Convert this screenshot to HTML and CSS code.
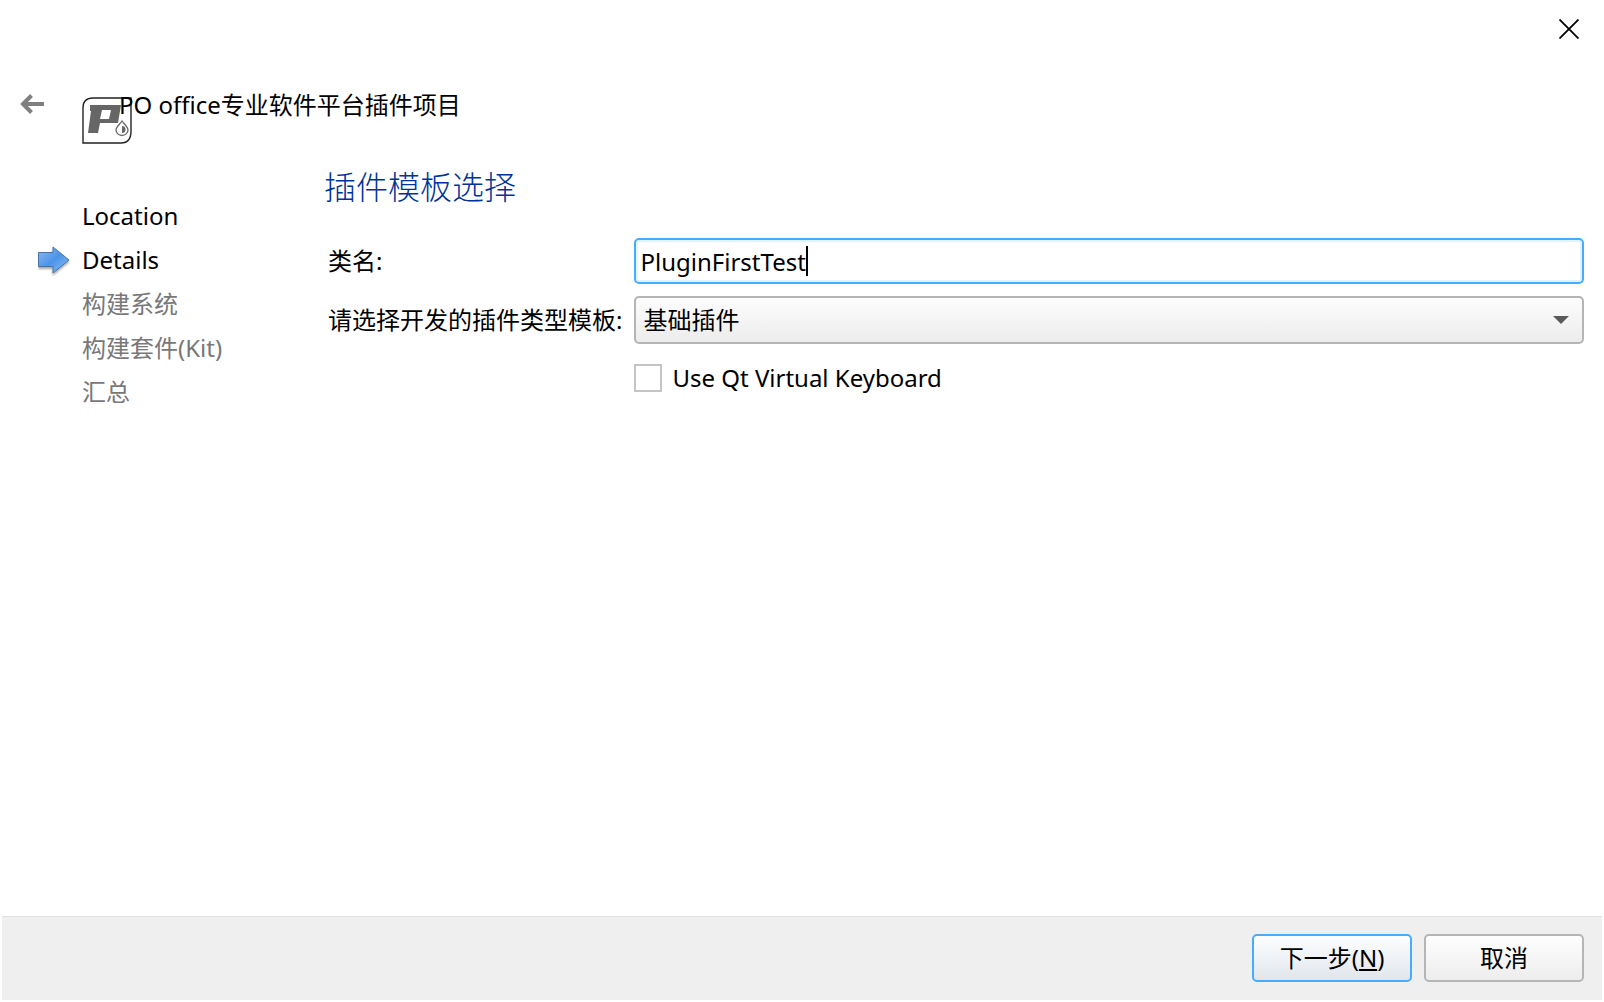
FILE: index.html
```
<!DOCTYPE html>
<html lang="zh-CN">
<head>
    <meta charset="UTF-8">
    <meta name="viewport" content="width=device-width, initial-scale=1.0">
    <title>PO office专业软件平台插件项目</title>
    <link rel="stylesheet" href="styles.css">
</head>
<body>
    <form class="wizard">
        <div class="titlebar">
            <button type="button" class="close" aria-label="关闭">
                <svg width="20" height="20" viewBox="0 0 20 20">
                    <path d="M0.5 0.5L19.5 19.5M19.5 0.5L0.5 19.5" stroke="#000" stroke-width="1.8"/>
                </svg>
            </button>
        </div>

        <header class="header">
            <button type="button" class="back" aria-label="返回">
                <svg width="24" height="20" viewBox="0 0 24 20">
                    <path d="M24 10H4M11.500 1.500L3 10L11.500 18.500" fill="none" stroke="#808080" stroke-width="4"/>
                </svg>
            </button>
            <div class="brand">
                <svg class="logo" width="50" height="47" viewBox="0 0 50 47">
                    <path d="M1 46V11Q1 1 11 1H49V34Q49 46 39 46Z" fill="#fff" stroke="#222" stroke-width="1.4"/>
                    <path fill-rule="evenodd" d="M8 8H39L36 26H18L16 36H6L9 14H8ZM20 13L18 22H27L29 13Z" fill="#666"/>
                    <path d="M40 24C38 27 34 30 34 33A6 5.500 0 0 0 46 33C46 30 42 27 40 24Z" fill="#fff" stroke="#666" stroke-width="1.3"/>
                    <path d="M40 29A3.500 3.500 0 0 1 40 36Z" fill="#666"/>
                </svg>
                <span class="project">PO office专业软件平台插件项目</span>
            </div>
        </header>

        <div class="content">
            <ol class="steps">
                <li>Location</li>
                <li class="current">
                    <svg class="pointer" width="32" height="32" viewBox="0 0 32 32">
                        <defs>
                            <linearGradient id="blue" x1="0" y1="0" x2="1" y2="1">
                                <stop offset="0" stop-color="#8fbdf2"/>
                                <stop offset="0.5" stop-color="#4c94e8"/>
                                <stop offset="1" stop-color="#8cc0f8"/>
                            </linearGradient>
                            <filter id="shadow" x="-20%" y="-20%" width="140%" height="150%">
                                <feDropShadow dx="0" dy="2" stdDeviation="1" flood-color="#000" flood-opacity="0.35"/>
                            </filter>
                        </defs>
                        <path d="M0.500 8.500H15V3L31 16L15 29V22.500H0.500Z" fill="url(#blue)" stroke="#4873a6" filter="url(#shadow)"/>
                    </svg>
                    Details
                </li>
                <li class="pending">构建系统</li>
                <li class="pending">构建套件(Kit)</li>
                <li class="pending">汇总</li>
            </ol>

            <main class="page">
                <h1>插件模板选择</h1>
                <div class="fields">
                    <label for="className">类名:</label>
                    <div class="text-field">
                        <input type="text" id="className" value="PluginFirstTest">
                        <span class="caret"></span>
                    </div>

                    <label for="template">请选择开发的插件类型模板:</label>
                    <div class="select-field">
                        <select id="template">
                            <option>基础插件</option>
                        </select>
                        <svg class="arrow" width="16" height="8" viewBox="0 0 16 8">
                            <path d="M0 0H16L8 8Z" fill="#5a5a5a"/>
                        </svg>
                    </div>

                    <div class="check-field">
                        <input type="checkbox" id="keyboard">
                        <label for="keyboard">Use Qt Virtual Keyboard</label>
                    </div>
                </div>
            </main>
        </div>

        <footer class="footer">
            <button type="button" class="btn primary">下一步(<u>N</u>)</button>
            <button type="button" class="btn">取消</button>
        </footer>
    </form>
</body>
</html>
```
FILE: styles.css
```
* {
    box-sizing: border-box;
}
body {
    margin: 0;
    background-color: #fff;
    color: #000;
}
body, button, input, select {
    font-family: "Noto Sans", "Noto Sans CJK SC", sans-serif;
    font-size: 24px;
    line-height: 32px;
}
.wizard {
    display: flex;
    flex-direction: column;
    min-height: 100vh;
    padding: 2px;
}
.titlebar {
    display: flex;
    justify-content: flex-end;
    padding: 17px 23px 16px;
}
.close, .back {
    display: flex;
    padding: 0;
    border: none;
    background: none;
}
.header {
    display: flex;
    align-items: center;
    gap: 38px;
    padding: 24px 18px 0;
}
.brand {
    display: flex;
    align-items: flex-start;
    height: 60px;
}
.back {
    margin-bottom: 10px;
}
.logo {
    margin-top: 18px;
}
.project {
    position: relative;
    margin-left: -13px;
    padding-top: 10px;
}
.content {
    display: flex;
    flex: 1;
    padding: 23px 18px 24px 80px;
}
.steps {
    width: 242px;
    margin: 0;
    padding: 32px 0 0;
    list-style: none;
    line-height: 44px;
}
.current {
    position: relative;
}
.pointer {
    position: absolute;
    left: -44px;
    top: 6px;
}
.pending {
    color: #787878;
}
.page {
    flex: 1;
}
h1 {
    margin: 0 0 30px;
    color: #003399;
    font-family: "Noto Sans CJK SC", sans-serif;
    font-size: 32px;
    font-weight: 300;
    line-height: 46px;
}
.fields {
    display: grid;
    grid-template-columns: auto 1fr;
    align-items: center;
    gap: 12px;
    padding-left: 4px;
}
.text-field, .select-field {
    position: relative;
    display: flex;
}
.text-field input {
    width: 100%;
    height: 46px;
    padding: 0 4px;
    border: 2px solid #45acfe;
    border-radius: 5px;
    outline: none;
    box-shadow: inset 0 0 0 2px #e3f2ff;
}
.caret {
    position: absolute;
    left: 172px;
    top: 8px;
    width: 2px;
    height: 30px;
    background-color: #000;
}
.select-field select {
    width: 100%;
    height: 48px;
    padding: 0 7px;
    border: 2px solid #b5b5b5;
    border-radius: 5px;
    background: linear-gradient(#fdfdfd, #ececec);
    color: #000;
    appearance: none;
}
.arrow {
    position: absolute;
    right: 15px;
    top: 20px;
}
.check-field {
    grid-column: 2;
    display: flex;
    align-items: center;
    gap: 10px;
    padding-top: 6px;
}
.check-field input {
    width: 28px;
    height: 28px;
    margin: 0;
    border: 2px solid #c4c4c4;
    background-color: #fff;
    appearance: none;
}
.footer {
    display: flex;
    justify-content: flex-end;
    gap: 12px;
    padding: 17px 18px 18px;
    border-top: 1px solid #dfdfdf;
    background-color: #efefef;
}
.btn {
    width: 160px;
    height: 48px;
    padding: 0;
    border: 2px solid #b5b5b5;
    border-radius: 5px;
    background: linear-gradient(#fefefe, #ededed);
    color: #000;
}
.btn.primary {
    border-color: #45acfe;
    background: linear-gradient(#fdfeff, #e1e6ec);
}
```
